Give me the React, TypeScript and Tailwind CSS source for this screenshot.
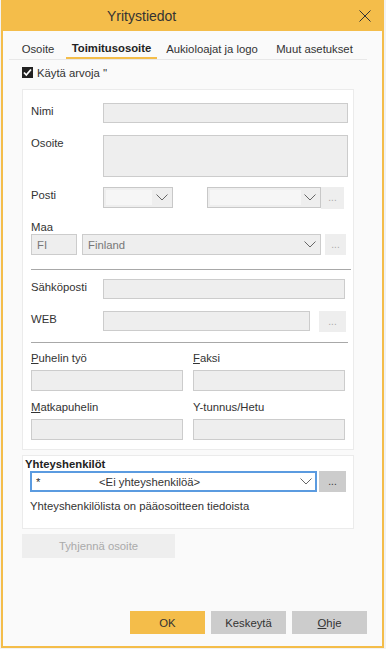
import React from "react";

const Chevron = ({ color = "#666" }: { color?: string }) => (
  <svg width="12" height="7" viewBox="0 0 12 7" fill="none">
    <path d="M0.5 0.5L6 6L11.5 0.5" stroke={color} strokeWidth="1" />
  </svg>
);

const Dots = ({ dark = false }: { dark?: boolean }) => (
  <span
    className={`text-[10px] leading-none pt-[6px] ${
      dark ? "text-[#333]" : "text-[#aaa]"
    }`}
  >
    ...
  </span>
);

const Input = ({ w, h = 20 }: { w: number; h?: number }) => (
  <div
    className="bg-[#eeeeee] border border-[#cccccc] shrink-0"
    style={{ width: w, height: h }}
  />
);

const Tab = ({ label, w, active }: { label: string; w: number; active?: boolean }) => (
  <div
    className={`flex items-center justify-center h-full shrink-0 -mb-px ${
      active ? "border-b-2 border-[#f4bd4a] font-bold text-[#222]" : "text-[#333]"
    }`}
    style={{ width: w }}
  >
    {label}
  </div>
);

export default function App() {
  return (
    <div
      className="w-[386px] h-[649px] bg-[#f2f2f2] pl-px text-[11.3px] leading-[14px] text-[#333]"
      style={{ fontFamily: '"Liberation Sans", Arial, sans-serif' }}
    >
      <div className="w-[383px] h-[648px] flex flex-col border-x-2 border-b-2 border-[#f4bd4a] bg-[#fafafa]">
        {/* Titlebar */}
        <div className="h-[31px] -mx-[2px] bg-[#f4bd4a] flex items-center shrink-0">
          <span className="ml-[106px] text-[14px] text-[#333]">Yritystiedot</span>
          <svg className="ml-auto mr-[13px]" width="12" height="12" viewBox="0 0 12 12">
            <path d="M0.5 0.5L11.5 11.5M11.5 0.5L0.5 11.5" stroke="#333" strokeWidth="1" />
          </svg>
        </div>

        {/* Tabs */}
        <div className="mt-[7px] ml-[6px] w-[358px] h-[22px] flex items-stretch gap-[3px] border-b border-[#e8e8e8] pl-[4px]">
          <Tab label="Osoite" w={50} />
          <Tab label="Toimitusosoite" w={91} active />
          <Tab label="Aukioloajat ja logo" w={104} />
          <Tab label="Muut asetukset" w={95} />
        </div>

        {/* Checkbox */}
        <div className="mt-[7px] ml-[19px] flex items-center h-[11px]">
          <svg width="11" height="11" viewBox="0 0 11 11">
            <rect width="11" height="11" fill="#222" />
            <path d="M2 5.5L4.3 8L9 2.5" stroke="#fff" strokeWidth="1.8" fill="none" />
          </svg>
          <span className="ml-[4px]">Käytä arvoja ''</span>
        </div>

        {/* Address panel */}
        <div className="mt-[11px] ml-[19px] w-[332px] h-[361px] bg-white border border-[#ebebeb] pl-[8px] shrink-0">
          <div className="mt-[13px] flex">
            <div className="w-[72px] pt-[1px]">Nimi</div>
            <Input w={245} />
          </div>
          <div className="mt-[12px] flex">
            <div className="w-[72px] pt-[1px]">Osoite</div>
            <Input w={245} h={42} />
          </div>
          <div className="mt-[10px] flex items-start">
            <div className="w-[72px] pt-[1px]">Posti</div>
            <div className="w-[70px] h-[21px] border border-[#c8c8c8] bg-[#eeeeee] flex items-center pl-[2px]">
              <div className="w-[46px] h-[15px] bg-[#f6f6f6]" />
              <div className="ml-auto mr-[4px]">
                <Chevron />
              </div>
            </div>
            <div className="ml-[34px] w-[114px] h-[21px] border border-[#c8c8c8] bg-[#eeeeee] flex items-center pl-[2px]">
              <div className="w-[91px] h-[15px] bg-[#f6f6f6]" />
              <div className="ml-auto mr-[4px]">
                <Chevron />
              </div>
            </div>
            <div className="w-[23px] h-[22px] bg-[#eeeeee] flex justify-center">
              <Dots />
            </div>
          </div>
          <div className="mt-[11px]">Maa</div>
          <div className="flex">
            <div className="w-[46px] h-[21px] border border-[#cccccc] bg-[#eeeeee] flex items-center pl-[5px] text-[#777]">
              FI
            </div>
            <div className="ml-[5px] w-[239px] h-[21px] border border-[#cccccc] bg-[#eeeeee] flex items-center pl-[5px] text-[#777]">
              Finland
              <div className="ml-auto mr-[4px]">
                <Chevron />
              </div>
            </div>
            <div className="ml-[4px] w-[21px] h-[21px] bg-[#eeeeee] flex justify-center">
              <Dots />
            </div>
          </div>
          <div className="mt-[14px] w-[320px] h-px bg-[#a8a8a8]" />
          <div className="mt-[9px] flex">
            <div className="w-[72px] pt-[1px]">Sähköposti</div>
            <Input w={242} />
          </div>
          <div className="mt-[12px] flex">
            <div className="w-[72px] pt-[1px]">WEB</div>
            <Input w={207} />
            <div className="ml-[9px] w-[27px] h-[21px] bg-[#eeeeee] flex justify-center">
              <Dots />
            </div>
          </div>
          <div className="mt-[10px] w-[317px] h-px bg-[#a8a8a8]" />
          <div className="mt-[8px] flex">
            <div className="w-[162px]">
              <u>P</u>uhelin työ
            </div>
            <div>
              <u>F</u>aksi
            </div>
          </div>
          <div className="mt-[5px] flex gap-[10px]">
            <Input w={152} h={21} />
            <Input w={152} h={21} />
          </div>
          <div className="mt-[9px] flex">
            <div className="w-[162px]">
              <u>M</u>atkapuhelin
            </div>
            <div>Y-tunnus/Hetu</div>
          </div>
          <div className="mt-[5px] flex gap-[10px]">
            <Input w={152} h={21} />
            <Input w={152} h={21} />
          </div>
        </div>

        {/* Contacts panel */}
        <div className="mt-[5px] ml-[19px] w-[332px] h-[74px] bg-white border border-[#ebebeb] shrink-0">
          <div className="ml-[2px] mt-[1px] font-bold text-[#222]">Yhteyshenkilöt</div>
          <div className="ml-[7px] flex">
            <div className="w-[287px] h-[21px] border-2 border-[#5b9be0] bg-white flex items-center pl-[4px]">
              <span className="w-[63px]">*</span>
              <span>&lt;Ei yhteyshenkilöä&gt;</span>
              <div className="ml-auto mr-[3px]">
                <Chevron />
              </div>
            </div>
            <div className="ml-[2px] w-[27px] h-[21px] bg-[#cccccc] flex justify-center">
              <Dots dark />
            </div>
          </div>
          <div className="mt-[7px] ml-[7px]">Yhteyshenkilölista on pääosoitteen tiedoista</div>
        </div>

        <div className="mt-[5px] ml-[19px] w-[153px] h-[24px] bg-[#eeeeee] text-[#aaa] flex items-center justify-center shrink-0">
          Tyhjennä osoite
        </div>

        {/* Footer */}
        <div className="mt-auto mb-[12px] mr-[15px] flex justify-end gap-[6px]">
          <div className="w-[75px] h-[23px] bg-[#f4bd4a] flex items-center justify-center">OK</div>
          <div className="w-[75px] h-[23px] bg-[#cccccc] flex items-center justify-center">Keskeytä</div>
          <div className="w-[75px] h-[23px] bg-[#cccccc] flex items-center justify-center">
            <u>O</u>hje
          </div>
        </div>
      </div>
    </div>
  );
}
